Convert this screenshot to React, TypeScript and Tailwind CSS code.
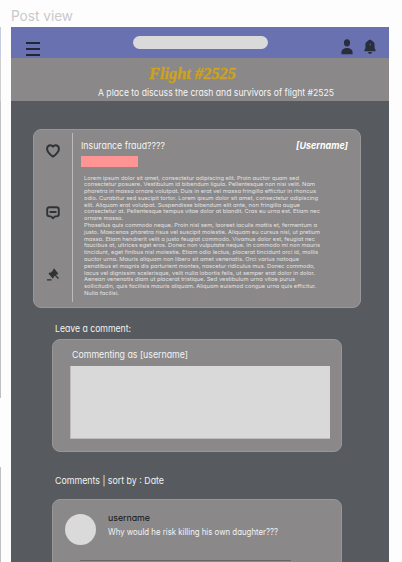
import { useLayoutEffect, useRef, useState } from "react";

type FitProps = { text: string; width: number; className?: string };

/* One line of text, condensed or expanded to the given width. */
function Fit({ text, width, className = "" }: FitProps) {
  const ref = useRef<HTMLSpanElement>(null);
  const [scale, setScale] = useState(1);
  useLayoutEffect(() => {
    const measure = () => {
      if (ref.current && ref.current.offsetWidth > 0) {
        setScale(width / parseFloat(getComputedStyle(ref.current).width));
      }
    };
    measure();
    document.fonts.ready.then(measure);
  }, [width]);
  return (
    <div className={"whitespace-nowrap " + className} style={{ width }}>
      <span ref={ref} className="inline-block origin-left" style={{ transform: `scaleX(${scale})` }}>
        {text}
      </span>
    </div>
  );
}

const body: [string, number][] = [
  ["Lorem ipsum dolor sit amet, consectetur adipiscing elit. Proin auctor quam sed", 215],
  ["consectetur posuere. Vestibulum id bibendum ligula. Pellentesque non nisi velit. Nam", 231],
  ["pharetra in massa ornare volutpat. Duis in erat vel massa fringilla efficitur in rhoncus", 232],
  ["odio. Curabitur sed suscipit tortor. Lorem ipsum dolor sit amet, consectetur adipiscing", 234],
  ["elit. Aliquam erat volutpat. Suspendisse bibendum elit ante, non fringilla augue", 216],
  ["consectetur at. Pellentesque tempus vitae dolor at blandit. Cras eu urna est. Etiam nec", 236],
  ["ornare massa.", 39],
  ["Phasellus quis commodo neque. Proin nisl sem, laoreet iaculis mattis et, fermentum a", 233],
  ["justo. Maecenas pharetra risus vel suscipit molestie. Aliquam eu cursus nisl, ut pretium", 236],
  ["massa. Etiam hendrerit velit a justo feugiat commodo. Vivamus dolor est, feugiat nec", 231],
  ["faucibus at, ultrices eget eros. Donec non vulputate neque. In commodo mi non mauris", 236],
  ["tincidunt, eget finibus nisl molestie. Etiam odio lectus, placerat tincidunt orci id, mollis", 234],
  ["auctor urna. Mauris aliquam non libero sit amet venenatis. Orci varius natoque", 215],
  ["penatibus et magnis dis parturient montes, nascetur ridiculus mus. Donec commodo,", 231],
  ["lacus vel dignissim scelerisque, velit nulla lobortis felis, ut semper erat dolor in dolor.", 231],
  ["Aenean venenatis diam ut placerat tristique. Sed vestibulum urna vitae purus", 211],
  ["sollicitudin, quis facilisis mauris aliquam. Aliquam euismod congue urna quis efficitur.", 232],
  ["Nulla facilisi.", 35],
];

function PersonIcon() {
  return (
    <svg width="12" height="16" viewBox="0 0 12 16" fill="#292d3c">
      <ellipse cx="6" cy="3.800" rx="3.100" ry="3.600" />
      <path d="M.4 15.200v-1.500C.4 10.600 3 9.100 6 9.100s5.600 1.500 5.600 4.600v1.500z" />
    </svg>
  );
}

function BellIcon() {
  return (
    <svg width="12" height="16" viewBox="0 0 12 16" fill="#292d3c">
      <path d="M6 .7c.9 0 1.500.4 1.700 1 1.900.6 2.900 2.200 2.900 4.300v3.200l.9 1.500v1.500H.5v-1.500l.9-1.500V6c0-2.100 1-3.700 2.900-4.300.2-.6.8-1 1.700-1z" />
      <path d="M4 13.100h4c0 1.100-.9 1.800-2 1.800s-2-.7-2-1.800z" />
      <path d="M5.700 4.200h1v2.600h-1z" fill="#565b78" />
    </svg>
  );
}

function HeartIcon() {
  return (
    <svg width="14" height="14" viewBox="0 0 14 14" fill="none" stroke="#303335" strokeWidth="2" strokeLinejoin="round">
      <path d="M7 2.700C5.900 1.200 4.400.9 3.100 1.500 1.500 2.200.9 3.900 1.200 5.600c.5 3 3.300 5.300 5.800 7 2.500-1.700 5.300-4 5.800-7 .3-1.700-.3-3.400-1.900-4.100C9.600.9 8.100 1.200 7 2.700z" />
    </svg>
  );
}

function ChatIcon() {
  return (
    <svg width="14" height="14" viewBox="0 0 14 14" fill="none" stroke="#303335" strokeLinejoin="round">
      <path strokeWidth="1.900" d="M3.500 1.300h7c1.500 0 2.300.8 2.300 2.300v4.500c0 1.500-.8 2.300-2.300 2.300H9L7 12.300l-2-1.900H3.500c-1.500 0-2.300-.8-2.300-2.300V3.600c0-1.500.8-2.300 2.300-2.300z" />
      <path strokeWidth="2.200" strokeLinecap="round" d="M4.400 6h5.200" />
    </svg>
  );
}

function GavelIcon() {
  return (
    <svg width="14" height="14" viewBox="0 0 14 14" fill="#303335">
      <path d="M7 1.500 8.200.6l4 4.800-1 1.300-.8-.1-2.600 2.200-.1 1-1 .6-4.200-4.600 1-1.200.9.100 2.600-2.200z" />
      <path d="m9.200 7.200 3.300 3.200" stroke="#303335" strokeWidth="1.400" />
      <path d="M1 11.200h4.500v1.300H1z" />
    </svg>
  );
}

export default function App() {
  return (
    <div className="flex h-[562px] w-[402px] overflow-hidden bg-[#fdfdfe] font-[Inter,'Liberation_Sans',sans-serif] [font-feature-settings:'cv11']">
      <div className="w-[11px] pt-[27px]">
        <div className="h-[31px] w-px bg-[#c8cae0]" />
        <div className="h-[43px] w-px bg-[#cfcfcf]" />
        <div className="h-[297px] w-px bg-[#bfc1c3]" />
        <div className="mt-[69px] h-[95px] w-px bg-[#bfc1c3]" />
      </div>

      <div className="w-[378px] shrink-0">
        <div className="h-[27px] pt-[6px]">
          <Fit text="Post view" width={62} className="text-[14px] leading-[20px] text-[#c9c9c9] [font-feature-settings:normal]" />
        </div>

        <header className="flex h-[31px] items-start bg-[#6971b1]">
          <div className="ml-[15px] mt-[15px] flex w-[14px] flex-col gap-[4px]">
            <div className="h-[2px] bg-[#202637]" />
            <div className="h-[2px] bg-[#202637]" />
            <div className="h-[2px] bg-[#202637]" />
          </div>
          <div className="ml-[93px] mt-[9px] h-[13px] w-[135px] rounded-full bg-[#dadada]" />
          <div className="ml-[73px] mt-[12px] flex gap-[11px]">
            <PersonIcon />
            <BellIcon />
          </div>
        </header>

        <div className="h-[43px] bg-[#8a8888] pt-[6px]">
          <Fit
            text="Flight #2525"
            width={87}
            className="ml-[137.500px] h-[20px] font-['Liberation_Serif',serif] text-[17px] font-bold italic leading-[20px] text-[#cca220] [-webkit-text-stroke:0.4px_#cca220]"
          />
          <Fit text="A place to discuss the crash and survivors of flight #2525" width={236} className="ml-[86.500px] text-[9.500px] leading-[18px] text-[#f5f5f5]" />
        </div>

        <main className="h-[461px] bg-[#575b5f] pt-[28px]">
          <article className="ml-[22px] flex h-[179px] w-[328px] rounded-[8px] border border-[#989899] bg-[#8a8888]">
            <div className="flex w-[38px] flex-col items-center pr-[1px] pt-[13.500px]">
              <HeartIcon />
              <div className="mt-[48px]"><ChatIcon /></div>
              <div className="mt-[48px]"><GavelIcon /></div>
            </div>
            <div className="mt-[3px] h-[169px] w-px bg-[#bcbbbb]" />
            <div className="pl-[8px] pt-[6px]">
              <div className="flex h-[20px] items-center">
                <Fit text="Insurance fraud????" width={84} className="-mt-[1px] text-[9.500px] leading-[20px] text-[#f5f5f5]" />
                <Fit text="[Username]" width={52} className="-mt-[1px] ml-[131px] text-[9.500px] font-bold italic leading-[20px] text-white [font-feature-settings:normal]" />
              </div>
              <div className="h-[11px] w-[57px] bg-[#ff9495]" />
              <div className="ml-[3px] mt-[7.500px]">
                {body.map(([text, width]) => (
                  <Fit key={text} text={text} width={width} className="h-[6.810px] text-[5.100px] leading-[6.800px] text-[#e2e1e1]" />
                ))}
              </div>
            </div>
          </article>

          <Fit text="Leave a comment:" width={76} className="ml-[44px] mt-[11px] text-[9.500px] leading-[20px] text-[#f0f1f1]" />

          <section className="ml-[41px] h-[113px] w-[290px] rounded-[8px] border border-[#979798] bg-[#8a8888] pl-[17px] pt-[4px]">
            <Fit text="Commenting as [username]" width={116} className="ml-[1.500px] h-[22px] text-[9.500px] leading-[21px] text-[#f3f3f3]" />
            <div className="h-[73px] w-[260px] border-b border-l border-[#bdbdbd] bg-[#d9d9d9]" />
          </section>

          <Fit text="Comments | sort by : Date" width={109} className="ml-[44px] mt-[19px] text-[9.500px] leading-[20px] text-[#f0f1f1]" />

          <section className="ml-[41px] mt-[8px] h-[90px] w-[290px] rounded-[8px] border border-[#979798] bg-[#8a8888] pt-[14px]">
            <div className="flex h-[46px]">
              <div className="ml-[12px] h-[31px] w-[31px] rounded-full bg-[#dadada]" />
              <div className="ml-[12px] -mt-[3px]">
                <Fit text="username" width={42} className="text-[9px] leading-[14px] text-[#151515]" />
                <Fit text="Why would he risk killing his own daughter???" width={170} className="text-[8.500px] leading-[15px] text-[#f3f3f3]" />
              </div>
            </div>
            <div className="ml-[27px] h-px w-[211px] bg-[#69666a]" />
          </section>
        </main>
      </div>
    </div>
  );
}
